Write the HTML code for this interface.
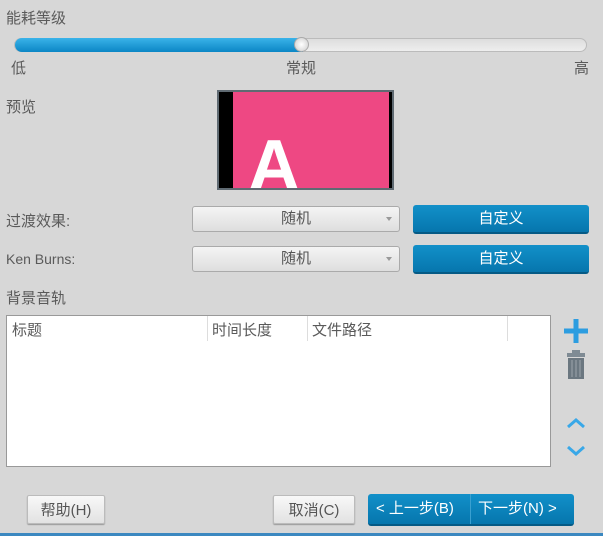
<!DOCTYPE html>
<html><head><meta charset="utf-8"><style>
body{margin:0;width:603px;height:536px;background:#d7d7d7;position:relative;overflow:hidden;font-family:"Liberation Sans","Noto Sans CJK SC",sans-serif;color:#5a5a5a;font-size:15px}
.a{position:absolute;white-space:nowrap}
.dd{position:absolute;width:206px;height:24px;border:1px solid #aaa;border-radius:3px;background:linear-gradient(#f4f4f4,#dedede);text-align:center;line-height:24px;color:#555}
.dd:after{content:"";position:absolute;right:7px;top:10px;border:3px solid transparent;border-top:4px solid #999}
.bb{position:absolute;width:176px;height:29px;border-radius:3px;background:linear-gradient(#1290c9,#0676ad);border-bottom:2px solid #055a85;color:#fff;text-align:center;line-height:28px;box-sizing:border-box}
.gb{position:absolute;height:29px;border:1px solid #bbb;border-radius:2px;background:linear-gradient(#f8f8f8,#e2e2e2);box-shadow:0 1px 1px #999;text-align:center;line-height:29px;color:#555;box-sizing:border-box}
</style></head><body>
<div class="a" style="left:6px;top:7px">能耗等级</div>
<div class="a" style="left:14px;top:38px;width:573px;height:14px;border-radius:7px;background:linear-gradient(#ddd,#eee);border:1px solid #bbb;box-sizing:border-box"></div>
<div class="a" style="left:15px;top:38px;width:288px;height:14px;border-radius:7px 0 0 7px;background:linear-gradient(#3ab3e9,#0b86c5)"></div>
<div class="a" style="left:294px;top:37px;width:15px;height:15px;border-radius:50%;background:radial-gradient(#fff,#ccc);border:1px solid #aaa;box-sizing:border-box"></div>
<div class="a" style="left:11px;top:57px">低</div>
<div class="a" style="left:286px;top:57px">常规</div>
<div class="a" style="left:574px;top:57px">高</div>
<div class="a" style="left:6px;top:96px">预览</div>
<div class="a" style="left:217px;top:90px;width:177px;height:100px;background:#5f6a72"></div>
<div class="a" style="left:219px;top:92px;width:173px;height:96px;background:#000;overflow:hidden">
<div class="a" style="left:14px;top:0;width:156px;height:96px;background:#ee4883;overflow:hidden">
<div class="a" style="left:15px;top:38px;font-size:72px;font-weight:bold;color:#fff;line-height:72px">A</div></div></div>
<div class="a" style="left:6px;top:210px">过渡效果:</div>
<div class="dd" style="left:192px;top:206px">随机</div>
<div class="bb" style="left:413px;top:205px">自定义</div>
<div class="a" style="left:6px;top:251px;font-size:14px">Ken Burns:</div>
<div class="dd" style="left:192px;top:246px">随机</div>
<div class="bb" style="left:413px;top:245px">自定义</div>
<div class="a" style="left:6px;top:287px">背景音轨</div>
<div class="a" style="left:6px;top:315px;width:545px;height:152px;background:#fff;border:1px solid #999;box-sizing:border-box">
<div class="a" style="left:5px;top:3px">标题</div>
<div class="a" style="left:200px;top:0;height:25px;border-left:1px solid #ddd"></div>
<div class="a" style="left:205px;top:3px">时间长度</div>
<div class="a" style="left:300px;top:0;height:25px;border-left:1px solid #ddd"></div>
<div class="a" style="left:305px;top:3px">文件路径</div>
<div class="a" style="left:500px;top:0;height:25px;border-left:1px solid #ddd"></div>
</div>
<svg class="a" style="left:560px;top:316px" width="34" height="150" viewBox="0 0 34 150">
<path d="M16 3v24M4 15h24" stroke="#2d9de0" stroke-width="5"/>
<rect x="7" y="37" width="18" height="4" fill="#7f8b94"/><rect x="12" y="34" width="8" height="3" fill="#7f8b94"/>
<rect x="8" y="42" width="16" height="21" fill="#6b7780"/>
<path d="M12 44v17M16 44v17M20 44v17" stroke="#8c969e" stroke-width="1.5"/>
<path d="M8 111l8-7 8 7" stroke="#39a8e8" stroke-width="3" fill="none"/>
<path d="M8 131l8 7 8-7" stroke="#39a8e8" stroke-width="3" fill="none"/>
</svg>
<div class="gb" style="left:27px;top:495px;width:78px">帮助(H)</div>
<div class="gb" style="left:273px;top:495px;width:82px">取消(C)</div>
<div class="a" style="left:368px;top:494px;width:206px;height:30px;border-radius:3px;background:linear-gradient(#1290c9,#0676ad);border-bottom:2px solid #055a85;color:#fff;line-height:30px">
<span class="a" style="left:8px">&lt; 上一步(B)</span>
<span class="a" style="left:102px;top:0;height:30px;border-left:1px solid #3aa0d0"></span>
<span class="a" style="left:110px">下一步(N) &gt;</span></div>
<div class="a" style="left:0;top:533px;width:603px;height:3px;background:#3b88c0"></div>
</body></html>
